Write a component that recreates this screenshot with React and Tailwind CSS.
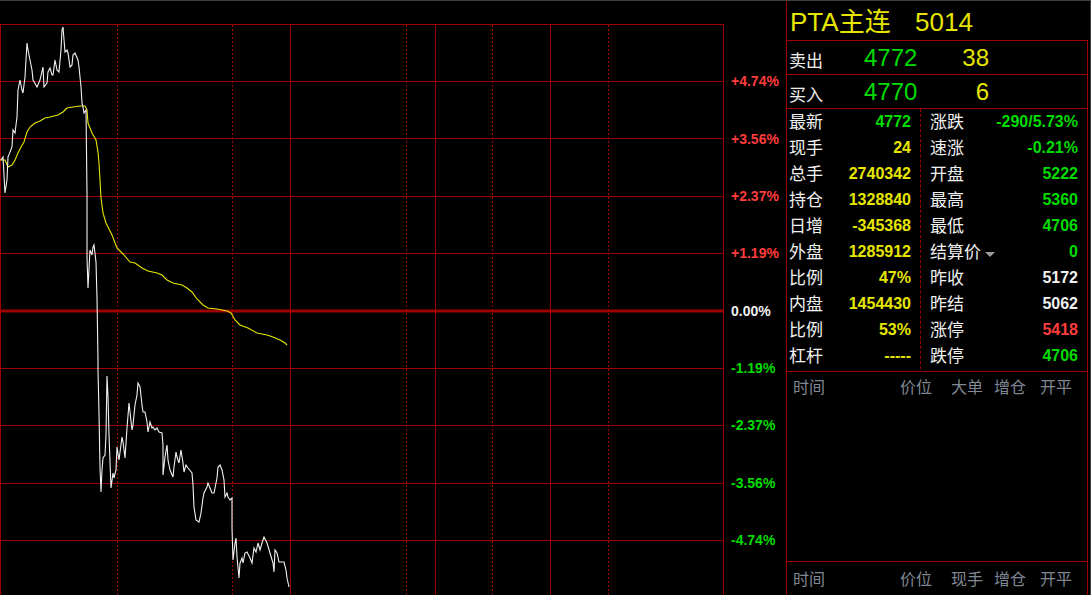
import React from 'react';

const RED = '#a00000';
const G = 'text-[#00dc00]';
const Y = 'text-[#e6e600]';
const W = 'text-[#f0f0f0]';
const R = 'text-[#ff3c3c]';

// pixel-traced intraday series (x, y in page coordinates)
const price = [
  [1,160],[3,157],[5,193],[7,180],[8,157],[12,147],[13,130],[15,133],[17,117],[18,90],[20,80],[22,90],[23,93],[25,77],[27,43],[28,50],[32,70],[33,80],[37,87],[40,80],[43,67],[44,87],[47,83],[48,72],[50,68],[52,75],[53,75],[55,60],[57,70],[59,72],[61,50],[62,30],[63,27],[65,52],[67,50],[68,53],[70,67],[72,65],[73,55],[75,53],[78,60],[79,67],[81,87],[82,103],[83,107],[84,113],[86,110],[87,193],[87,257],[88,288],[90,250],[92,255],[93,247],[94,245],[96,262],[97,298],[98,360],[98,370],[99,413],[100,467],[101,492],[102,470],[103,458],[105,455],[106,435],[107,376],[108,397],[109,435],[111,488],[113,473],[114,478],[116,470],[117,447],[119,460],[122,437],[123,442],[125,458],[127,428],[129,403],[132,430],[133,425],[135,405],[137,395],[138,383],[140,387],[142,405],[143,412],[145,412],[147,422],[148,432],[150,422],[152,428],[153,427],[155,430],[157,428],[159,432],[162,433],[163,445],[163,475],[165,457],[167,445],[168,460],[170,470],[173,477],[174,467],[176,452],[177,457],[179,463],[181,450],[183,463],[184,472],[186,465],[188,468],[192,473],[193,485],[194,507],[196,520],[199,522],[201,513],[203,498],[204,493],[207,487],[208,483],[210,488],[212,493],[214,493],[217,478],[218,467],[220,465],[222,470],[224,480],[225,497],[227,493],[228,497],[230,500],[232,498],[232,528],[233,560],[235,543],[236,538],[237,557],[239,578],[240,563],[242,558],[243,563],[245,553],[247,552],[250,558],[252,563],[254,548],[256,552],[258,543],[260,550],[262,543],[264,537],[267,543],[270,553],[273,563],[274,572],[275,550],[277,553],[279,562],[284,562],[286,570],[287,578],[289,587],
];

const avg = [
  [0,160],[5,160],[8,167],[12,165],[15,160],[18,153],[21,147],[24,142],[27,132],[30,127],[35,123],[40,121],[45,118],[50,117],[58,115],[63,112],[67,108],[73,107],[80,106],[85,106],[87,110],[88,123],[92,133],[96,140],[98,152],[99,163],[100,180],[101,198],[103,213],[106,223],[112,235],[117,248],[123,254],[130,262],[135,263],[142,268],[148,271],[157,273],[162,275],[167,280],[173,283],[182,285],[187,288],[192,292],[197,299],[203,305],[208,308],[217,309],[227,311],[231,313],[235,320],[240,325],[248,328],[257,333],[267,335],[273,337],[280,340],[285,343],[287,345],
];

const hLines = [24, 81, 138, 196, 253, 368, 425, 483, 540];
const vSolid = [0, 290, 435, 550, 723];
const vDotted = [117, 232, 406, 492, 608];

const axis = [
  { t: '+4.74%', c: R },
  { t: '+3.56%', c: R },
  { t: '+2.37%', c: R },
  { t: '+1.19%', c: R },
  { t: '0.00%', c: W },
  { t: '-1.19%', c: G },
  { t: '-2.37%', c: G },
  { t: '-3.56%', c: G },
  { t: '-4.74%', c: G },
];

const left = [
  ['最新', '4772', G],
  ['现手', '24', Y],
  ['总手', '2740342', Y],
  ['持仓', '1328840', Y],
  ['日增', '-345368', Y],
  ['外盘', '1285912', Y],
  ['比例', '47%', Y],
  ['内盘', '1454430', Y],
  ['比例', '53%', Y],
  ['杠杆', '-----', Y],
];

const right = [
  ['涨跌', '-290/5.73%', G],
  ['速涨', '-0.21%', G],
  ['开盘', '5222', G],
  ['最高', '5360', G],
  ['最低', '4706', G],
  ['结算价', '0', G, true],
  ['昨收', '5172', W],
  ['昨结', '5062', W],
  ['涨停', '5418', R],
  ['跌停', '4706', G],
];

const toPts = (arr) => arr.map(([x, y]) => `${x},${y}`).join(' ');

const Chart = () => (
  <svg width="724" height="594" viewBox="0 1 724 594" className="block shrink-0">
    {hLines.map((y) => (
      <line key={'h' + y} x1="0" x2="724" y1={y + 0.5} y2={y + 0.5} stroke={RED} strokeWidth="1" />
    ))}
    <line x1="0" x2="724" y1="311" y2="311" stroke={RED} strokeWidth="3" />
    {vSolid.map((x) => (
      <line key={'v' + x} x1={x + 0.5} x2={x + 0.5} y1="24" y2="595" stroke={RED} strokeWidth="1" />
    ))}
    {vDotted.map((x) => (
      <line key={'d' + x} x1={x + 0.5} x2={x + 0.5} y1="25" y2="595" stroke={RED} strokeWidth="1" strokeDasharray="2 2" />
    ))}
    <polyline points={toPts(avg)} fill="none" stroke="#e6e600" strokeWidth="1.1" />
    <polyline points={toPts(price)} fill="none" stroke="#f2f2f2" strokeWidth="1.1" />
  </svg>
);

const Cell = ({ label, value, color, drop, right }) => (
  <div className={`flex h-[26px] items-center justify-between ${right ? 'pl-[9px] pr-[9px]' : 'pl-[2px] pr-[9px]'}`}>
    <span className="flex items-center text-[17px] leading-none text-[#f0f0f0]">
      {label}
      {drop && <span className="ml-[4px] mt-[4px] h-0 w-0 border-x-[5px] border-t-[5px] border-x-transparent border-t-[#9a9a9a]" />}
    </span>
    <span className={`text-[16px] font-bold leading-none ${color}`}>{value}</span>
  </div>
);

const TickHeader = ({ third }) => (
  <div className="flex h-[31px] items-center pl-[6px] text-[16px] leading-none text-[#7f8894]">
    <span className="w-[107px]">时间</span>
    <span className="w-[51px]">价位</span>
    <span className="w-[43px]">{third}</span>
    <span className="w-[46px]">增仓</span>
    <span>开平</span>
  </div>
);

export default function App() {
  return (
    <div className="h-[595px] w-[1091px] overflow-hidden border-t border-r border-[#404040] bg-black font-['Liberation_Sans','Noto_Sans_CJK_SC',sans-serif]">
      <div className="flex h-[594px]">
        <Chart />

        {/* percent axis */}
        <div className="w-[62px] shrink-0 pt-[51.7px] pl-[7px]">
          {axis.map((a) => (
            <div key={a.t} className="flex h-[57.33px] items-center">
              <span className={`text-[14px] font-bold leading-none ${a.c}`}>{a.t}</span>
            </div>
          ))}
        </div>

        {/* quote panel */}
        <div className="flex w-[302px] shrink-0 flex-col border-l border-[#a00000]">
          <div className="flex h-[39px] items-center pl-[3px] pt-[3px] text-[26px] leading-none text-[#e6e600]">
            <span className="w-[125px]">PTA主连</span>
            <span>5014</span>
          </div>

          <div className="flex flex-1 flex-col border-t border-r border-[#a00000]">
            <div className="flex h-[34px] items-center border-b border-[#a00000]">
              <span className="w-[77px] pl-[2px] pt-[8px] text-[17px] leading-none text-[#f0f0f0]">卖出</span>
              <span className="w-[56px] text-[24px] leading-none text-[#00dc00]">4772</span>
              <span className="w-[69px] text-right text-[24px] leading-none text-[#e6e600]">38</span>
            </div>
            <div className="flex h-[34px] items-center border-b border-[#a00000]">
              <span className="w-[77px] pl-[2px] pt-[8px] text-[17px] leading-none text-[#f0f0f0]">买入</span>
              <span className="w-[56px] text-[24px] leading-none text-[#00dc00]">4770</span>
              <span className="w-[69px] text-right text-[24px] leading-none text-[#e6e600]">6</span>
            </div>

            <div className="flex border-b border-[#a00000] pb-[2px]">
              <div className="w-[134px] border-r border-dashed border-[#a00000]">
                {left.map(([l, v, c], i) => (
                  <Cell key={i} label={l} value={v} color={c} />
                ))}
              </div>
              <div className="flex-1">
                {right.map(([l, v, c, d], i) => (
                  <Cell key={i} label={l} value={v} color={c} drop={d} right />
                ))}
              </div>
            </div>

            <div className="h-[190px] border-b border-[#a00000]">
              <TickHeader third="大单" />
            </div>
            <div className="pt-[2px]">
              <TickHeader third="现手" />
            </div>
          </div>
        </div>
      </div>
    </div>
  );
}
